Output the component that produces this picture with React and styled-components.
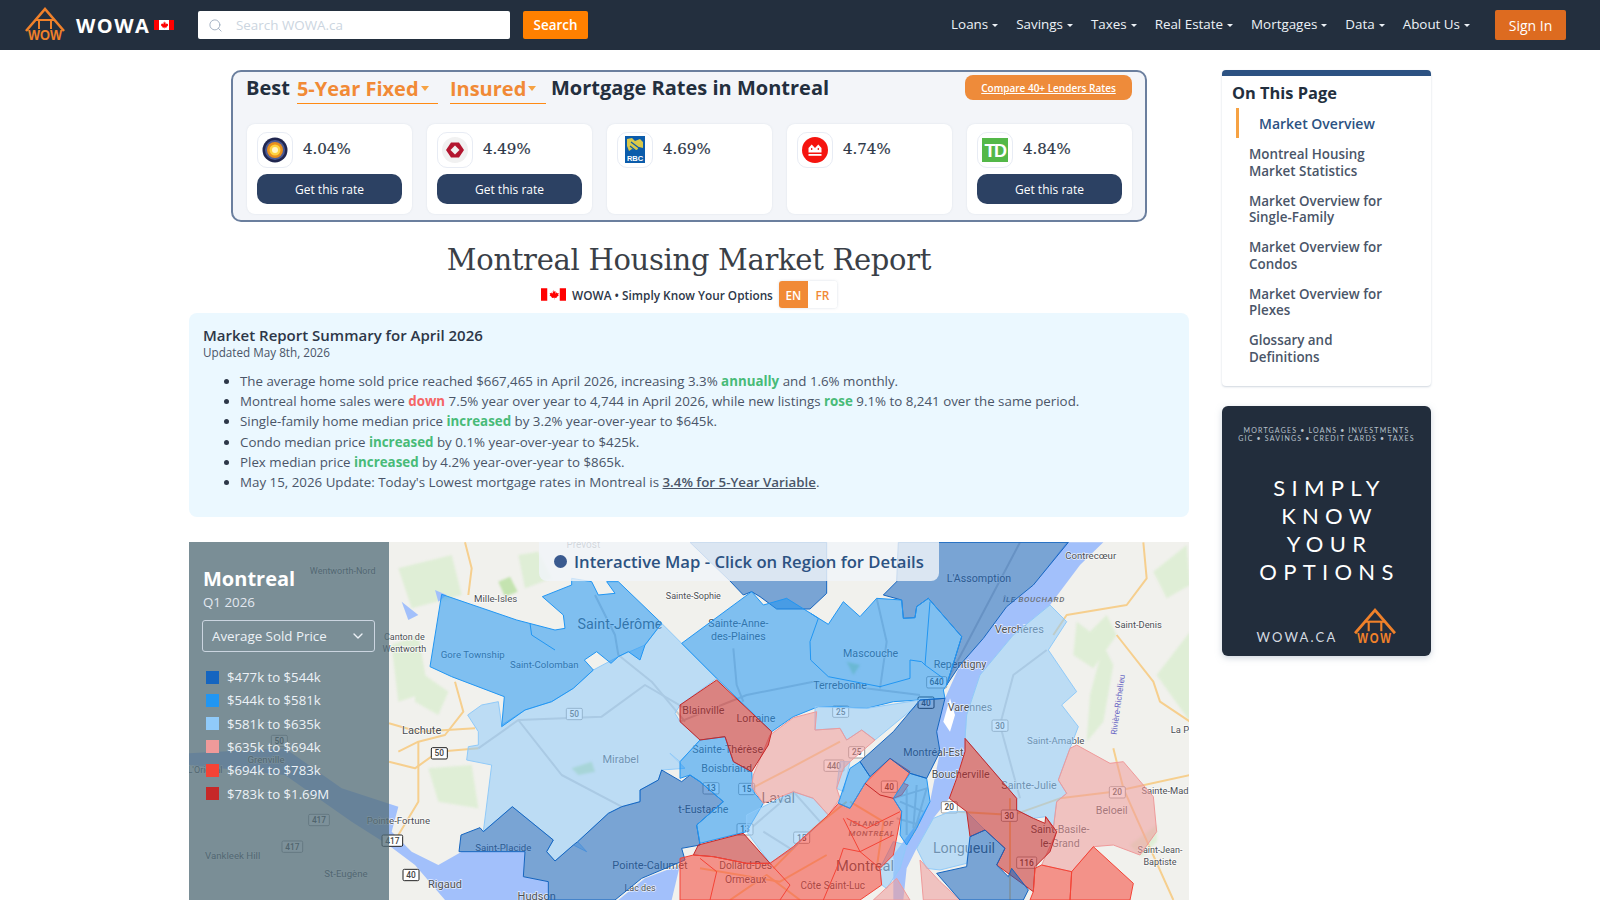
import React from "react";
import styled, { createGlobalStyle } from "styled-components";
import { Search, ChevronDown } from "lucide-react";

const GlobalStyle = createGlobalStyle`
  html, body { margin: 0; padding: 0; background: #fff; overflow: hidden; }
  body { font-family: "Open Sans", "Liberation Sans", sans-serif; color: #2d3748; }
  * { box-sizing: border-box; }
`;

const ORANGE = "#f18a36";
const NAVY = "#2c4163";
const TONES = {
  dark: "#1565c0",
  mid: "#2196f3",
  light: "#90caf9",
  pink: "#ef9a9a",
  red: "#f44336",
  crimson: "#c62828",
};

const menu = ["Loans", "Savings", "Taxes", "Real Estate", "Mortgages", "Data", "About Us"];

const legend = [
  ["dark", "$477k to $544k"],
  ["mid", "$544k to $581k"],
  ["light", "$581k to $635k"],
  ["pink", "$635k to $694k"],
  ["red", "$694k to $783k"],
  ["crimson", "$783k to $1.69M"],
];

const toc = [
  "Montreal Housing Market Statistics",
  "Market Overview for Single-Family",
  "Market Overview for Condos",
  "Market Overview for Plexes",
  "Glossary and Definitions",
];

// coordinates: map x = 3 * (page x - 185), y = 3 * (page y - 535)
const E = 1485;
const east = (s) =>
  s.trim().split(/\s+/).map((p) => {
    const [x, y] = p.split(",").map(Number);
    return `${x + E},${y}`;
  }).join(" ");

const regions = [
  ["light", "880,590 848,540 890,510 940,500 950,570 1020,525 1100,500 1165,460 1225,405 1300,365 1380,330 1430,265 1490,325 1595,430 1485,510 1470,535 1485,560 1545,615 1485,680 1455,655 1500,700 1430,705 1420,735 1365,765 1365,800 1310,815 1270,835 1178,920 1205,950 1165,930 1110,978 1085,950 1105,915 982,815 895,890 920,690 845,675 850,635 880,630"],
  ["mid", "770,178 995,255 1110,285 1140,280 1135,240 1072,185 1160,150 1160,130 1220,140 1240,180 1290,175 1265,140 1300,140 1430,265 1380,330 1365,375 1330,350 1300,365 1278,385 1235,350 1198,375 1225,405 1165,460 1100,500 1020,525 950,575 958,485 800,425 735,395"],
  ["dark", "822,950 828,900 885,878 895,890 982,815 1105,915 1085,950 1110,978 1165,930 1178,920 1270,835 1310,815 1365,800 1365,765 1420,735 1430,705 1490,740 1515,720 1545,740 1615,800 1535,870 1545,930 1490,940 1500,975 1370,1030 1290,1095 1090,1095 1090,1040 1015,1025 1020,950"],
  ["dark", east("30,22 440,22 440,175 390,222 290,222 240,185 215,170 190,180 150,138")],
  ["dark", east("610,180 650,140 655,22 1165,22 1060,150 980,215 910,310 840,390 800,450 845,305 745,190 710,215 705,248 670,250 665,195")],
  ["mid", east("5,325 215,170 250,210 320,190 392,235 445,268 490,200 540,245 590,190 665,195 670,250 705,248 710,215 745,190 845,305 800,450 790,465 795,490 720,495 640,500 560,520 470,515 415,515 340,545 275,590 110,430")],
  ["mid", east("0,680 60,615 135,605 160,680 215,710 220,770 250,805 200,890 60,925 50,870 130,800 60,740 30,720 0,730")],
  ["light", east("1110,210 1160,260 1105,345 1190,470 1145,510 1195,575 1170,640 1135,735 1160,775 1130,800 1120,880 1097,845 1060,850 1010,825 1010,790 855,610 860,540 900,420 1000,300")],
  ["light", east("405,515 560,520 720,495 700,520 585,615 545,585 500,615 480,580 405,585")],
  ["light", east("480,680 510,680 490,770 470,760")],
  ["light", east("200,840 340,770 400,790 445,840 340,940 270,985 200,890")],
  ["light", east("710,940 760,850 810,830 860,830 915,885 870,905 860,985 780,1005 740,1000")],
  ["light", east("640,920 680,930 660,1000 620,1060 605,1050 600,1000")],
  ["pink", east("220,720 270,600 340,548 410,530 405,585 480,580 500,615 545,585 585,615 510,680 490,700 470,760 480,790 445,840 400,790 340,770 250,805 215,755")],
  ["pink", east("1190,630 1290,685 1330,680 1420,785 1430,890 1380,960 1300,930 1240,935 1175,1010 1085,990 1130,890 1097,845 1120,880 1130,800 1160,775 1135,735 1170,640")],
  ["pink", east("580,1095 650,1030 690,1095")],
  ["pink", east("720,975 780,1040 840,1095 730,1095")],
  ["crimson", east("0,510 110,435 275,590 265,630 215,710 160,680 135,605 60,615 0,560")],
  ["crimson", east("855,610 1010,790 1010,825 1060,850 1095,865 1097,845 1130,890 1110,950 1065,995 1060,1070 950,990 975,940 915,885 870,905 860,830 808,790 830,730 855,650")],
  ["red", east("1240,935 1360,1045 1350,1095 1170,1095 1175,1010")],
  ["red", east("1085,990 1065,1000 1060,1070 1050,1095 1170,1095 1175,1010")],
  ["crimson", east("40,960 55,930 190,895 270,985 200,985 100,965")],
  ["red", east("40,960 100,965 200,985 270,985 340,935 445,840 475,805 510,820 555,745 630,670 690,710 670,745 685,750 665,780 640,790 665,830 640,960 600,1000 605,1050 540,1095 0,1095 0,970")],
  ["mid", east("475,805 510,700 540,680 570,725 555,745 510,820")],
  ["mid", east("640,790 670,745 690,715 740,730 750,800 710,880 680,930 660,900 665,830")],
  ["dark", east("540,680 640,590 720,495 795,490 770,590 780,650 740,730 690,715 630,670 570,725")],
  ["dark", east("870,905 915,885 975,940 950,990 985,1025 995,1000 1045,1065 1030,1095 840,1095 770,1015 860,995")],
];

const borders = [
  ["mid", "1035,265 1040,300 1110,345"],
  ["mid", east("392,235 415,250 390,320 392,375 445,425 600,455 690,430 690,375 725,380 735,390 790,430")],
  ["mid", east("750,200 735,390")],
  ["red", east("500,850 560,880 660,830")],
  ["red", east("490,850 540,950 640,900")],
  ["red", east("470,1000 490,940 540,950 600,1000")],
  ["red", east("270,985 330,1050 300,1095")],
  ["crimson", east("555,745 600,780 640,790")],
  ["red", east("90,1095 110,1010 60,970")],
  ["red", east("430,1095 470,1000")],
];

const greens = [
  ["940,140 975,125 998,170 960,185", true],
  ["620,330 700,300 730,470 640,500", false],
  ["690,400 790,470 760,540 690,500", false],
  ["730,700 860,690 880,820 760,800", false],
  ["640,100 800,60 830,180 680,220", false],
  ["1000,60 1060,50 1100,130 1020,160", false],
  ["1160,700 1220,680 1230,710 1180,720", true],
  [east("1190,260 1230,290 1280,240 1310,300 1240,400 1180,360"), false],
  [east("1230,480 1270,330 1300,390 1270,560 1220,620"), false],
  [east("1430,420 1530,290 1530,560"), false],
  [east("1420,110 1520,30 1530,150 1460,190"), false],
  [east("1350,930 1430,870 1430,920 1385,965"), false],
  [east("500,380 540,390 520,420"), true],
];

const waters = [
  "12,655 300,640 470,760 640,815 620,890 680,950 760,990 830,950 1020,950 1015,1025 1090,1040 1090,1095 780,1095 690,990 610,930 500,860 300,720 12,690",
  "650,200 700,240 670,255",
  "750,165 785,180 760,200",
  "1300,1095 1380,1030 1485,990 1460,1095",
  east("1160,22 1270,22 1200,90 1110,210 1000,300 900,420 860,540 855,650 808,790 760,850 710,940 680,1000 670,1095 640,1095 640,960 700,880 750,800 780,650 770,590 795,490 840,390 910,310 980,215 1060,150"),
];

const orangeRoads = [
  "612,680 690,700 760,650 880,640",
  "612,565 700,590 870,580",
  "840,22 860,100 850,180",
  "810,440 835,530 780,600 700,620 640,650",
  "700,620 700,800 640,900",
  east("1530,720 1300,770 1140,790 1000,840 830,830 760,800"),
  east("1390,22 1400,130 1340,210 1160,240 1120,300"),
  east("1310,300 1420,440 1440,500 1530,560"),
  east("1300,640 1330,760 1370,850 1480,1095"),
  east("990,790 990,1095"),
  east("215,760 330,700 480,620"),
  east("280,1000 400,880 500,800"),
  east("60,1000 300,1040 440,960"),
  east("510,800 610,860 590,1000"),
  east("150,1095 260,1020 360,1095"),
];

const greyRoads = [
  "880,640 1000,555 1250,545 1380,450 1500,520",
  "1230,180 1290,300 1300,360 1400,440 1500,560",
  "1000,555 1130,720 1310,815",
  east("1020,22 800,440"),
  east("590,190 620,320 600,460"),
  east("0,560 200,480 400,440 720,480"),
  east("160,340 170,450 190,500"),
  east("1100,345 1000,420 960,570 1020,790"),
  east("200,890 340,770 420,860"),
  east("640,790 740,760 700,900"),
  east("660,800 730,830"),
  east("650,850 720,870"),
  east("680,760 680,900"),
  east("710,750 700,880"),
  east("250,890 330,940"),
];

const labels = [
  ["Prevost", 1195, 38, 30],
  ["Wentworth-Nord", 473, 118, 27],
  ["Mille-Isles", 932, 200, 29],
  ["Canton de", 658, 316, 27],
  ["Wentworth", 658, 352, 27],
  ["Gore Township", 863, 370, 29],
  ["Saint-Colomban", 1078, 400, 29],
  ["Saint-Jérôme", 1305, 283, 43],
  ["Lachute", 710, 598, 33],
  ["Mirabel", 1307, 683, 33],
  ["Saint-Placide", 955, 948, 29],
  ["Pointe-Calumet", 1395, 1002, 33],
  ["Rigaud", 780, 1058, 33],
  ["Hudson", 1055, 1094, 33],
  ["Lac des", 1365, 1068, 27],
  ["Pointe-Fortune", 640, 868, 29],
  ["Grenville", 243, 683, 29],
  ["L'Orignal", 60, 714, 27],
  ["Vankleek Hill", 143, 973, 29],
  ["St-Eugène", 483, 1026, 29],
  ["Sainte-Sophie", E + 40, 193, 27],
  ["L'Assomption", E + 897, 142, 32],
  ["Contrecœur", E + 1232, 73, 29],
  ["Saint-Denis", E + 1375, 278, 28],
  ["Verchères", E + 1018, 293, 33],
  ["Sainte-Anne-", E + 175, 276, 32],
  ["des-Plaines", E + 175, 316, 32],
  ["Mascouche", E + 572, 365, 32],
  ["Repentigny", E + 840, 398, 32],
  ["Terrebonne", E + 480, 463, 32],
  ["Varennes", E + 870, 527, 32],
  ["La P", E + 1500, 593, 28],
  ["Saint-Amable", E + 1127, 627, 29],
  ["Blainville", E + 70, 537, 32],
  ["Lorraine", E + 228, 560, 32],
  ["Sainte-Thérèse", E + 143, 655, 32],
  ["Boisbriand", E + 140, 710, 32],
  ["Montréal-Est", E + 760, 664, 32],
  ["Boucherville", E + 842, 730, 32],
  ["Sainte-Julie", E + 1047, 762, 32],
  ["Laval", E + 295, 803, 43],
  ["Beloeil", E + 1295, 836, 32],
  ["Sainte-Mad", E + 1455, 777, 28],
  ["Saint-Basile-", E + 1140, 895, 32],
  ["le-Grand", E + 1140, 936, 32],
  ["Saint-Jean-", E + 1440, 953, 27],
  ["Baptiste", E + 1440, 989, 27],
  ["Longueuil", E + 852, 955, 43],
  ["Montreal", E + 555, 1007, 44],
  ["Dollard-Des", E + 197, 1003, 31],
  ["Ormeaux", E + 197, 1045, 31],
  ["Côte Saint-Luc", E + 458, 1063, 30],
  ["t-Eustache", E + 70, 835, 32],
];

const areaLabels = [
  ["ÎLE BOUCHARD", E + 1062, 202],
  ["ISLAND OF", E + 575, 873],
  ["MONTREAL", E + 575, 903],
];

const shields = [
  ["50", 1168, 537, 48, false],
  ["50", 763, 655, 48, true],
  ["50", 283, 618, 48, false],
  ["417", 402, 855, 62, false],
  ["417", 322, 935, 62, false],
  ["417", 622, 917, 62, true],
  ["40", 678, 1020, 48, true],
  ["640", E + 770, 442, 60, false],
  ["40", E + 738, 503, 48, true],
  ["25", E + 482, 530, 48, false],
  ["25", E + 530, 652, 48, false],
  ["440", E + 462, 692, 60, false],
  ["13", E + 93, 760, 48, false],
  ["15", E + 200, 762, 48, false],
  ["13", E + 195, 883, 48, false],
  ["15", E + 365, 908, 48, false],
  ["40", E + 628, 755, 48, false],
  ["30", E + 960, 572, 48, false],
  ["20", E + 808, 817, 48, false],
  ["30", E + 988, 842, 48, false],
  ["116", E + 1040, 983, 60, false],
  ["20", E + 1312, 772, 48, false],
];

const lenders = [
  { name: "tangerine", rate: "4.04%", cta: true },
  { name: "scotia", rate: "4.49%", cta: true },
  { name: "rbc", rate: "4.69%", cta: false },
  { name: "bmo", rate: "4.74%", cta: false },
  { name: "td", rate: "4.84%", cta: true },
];

const Page = styled.div`
  width: 1600px;
  height: 900px;
  overflow: hidden;
`;

const Nav = styled.header`
  height: 50px;
  background: #232f3e;
  display: flex;
  align-items: center;
  padding: 0 34px 0 25px;
`;

const Brand = styled.div`
  display: flex;
  align-items: center;
  width: 173px;
`;

const BrandName = styled.span`
  color: #fff;
  font-size: 20px;
  font-weight: 700;
  letter-spacing: 1.5px;
  margin: 0 4px 0 11px;
`;

const SearchBox = styled.div`
  width: 312px;
  height: 28px;
  background: #fff;
  border-radius: 2px;
  display: flex;
  align-items: center;
  gap: 13px;
  padding-left: 10px;
  color: #a0aec0;
  font-size: 13.4px;
  span { color: #cbd5e0; }
`;

const SearchButton = styled.button`
  height: 28px;
  width: 65px;
  margin-left: 13px;
  border: 0;
  border-radius: 2px;
  background: #ff8000;
  color: #fff;
  font: 600 13.4px "Open Sans", sans-serif;
`;

const Menu = styled.nav`
  margin-left: auto;
  margin-top: -2px;
  display: flex;
  gap: 18px;
  color: #edf2f7;
  font-size: 13.4px;
`;

const MenuItem = styled.span`
  display: flex;
  align-items: center;
  gap: 4px;
`;

const Caret = styled.i`
  width: 0;
  height: 0;
  margin-top: ${(p) => (p.$big ? 0 : 3)}px;
  border-left: ${(p) => (p.$big ? 4.5 : 3)}px solid transparent;
  border-right: ${(p) => (p.$big ? 4.5 : 3)}px solid transparent;
  border-top: ${(p) => (p.$big ? 5 : 3)}px solid ${(p) => p.$color || "#edf2f7"};
`;

const SignIn = styled.button`
  width: 71px;
  height: 30px;
  margin-left: 25px;
  border: 0;
  border-radius: 2px;
  background: #dd6b20;
  color: #fff;
  font: 400 14px "Open Sans", sans-serif;
`;

const Body = styled.div`
  display: flex;
  gap: 33px;
  padding-left: 189px;
`;

const Main = styled.main`
  width: 1000px;
  display: flex;
  flex-direction: column;
  align-items: center;
`;

const RateBox = styled.section`
  width: 916px;
  height: 152px;
  margin-top: 20px;
  border: 2px solid #6b7f9e;
  border-radius: 10px;
  background: #f3f5f9;
  padding: 0 13px 0 14px;
`;

const RateHead = styled.div`
  height: 52px;
  margin-left: -1px;
  display: flex;
  align-items: flex-start;
  font-size: 20px;
  font-weight: 700;
  color: #232f3e;
  padding-top: 2px;
  white-space: nowrap;
`;

const Pick = styled.span`
  display: flex;
  align-items: center;
  gap: 2px;
  width: ${(p) => p.$width}px;
  height: 30px;
  margin: 0 ${(p) => p.$after}px 0 ${(p) => p.$before}px;
  color: ${ORANGE};
  font-weight: 700;
  border-bottom: 1.5px solid #ff8a14;
`;

const Compare = styled.a`
  margin: 1px 0 0 auto;
  width: 167px;
  height: 25px;
  border-radius: 8px;
  background: #ee8b3a;
  color: #fff;
  font-size: 10px;
  font-weight: 600;
  text-decoration: underline;
  display: flex;
  align-items: center;
  justify-content: center;
`;

const Lenders = styled.div`
  display: flex;
  gap: 15px;
`;

const LenderCard = styled.div`
  width: 165px;
  height: 90px;
  background: #fff;
  border-radius: 8px;
  padding: 8px 10px 0;
  box-shadow: 0 0 2px rgba(160, 174, 192, 0.25);
`;

const LenderTop = styled.div`
  display: flex;
  align-items: flex-start;
  gap: 10px;
`;

const LogoTile = styled.div`
  width: 36px;
  height: 36px;
  border: 1px solid #e8ecf4;
  border-radius: 10px;
  display: flex;
  align-items: center;
  justify-content: center;
`;

const Rate = styled.span`
  font-family: "DejaVu Serif", serif;
  font-size: 15px;
  font-weight: 400;
  color: #2d3748;
  margin-top: 8px;
  -webkit-text-stroke: 0.2px #2d3748;
`;

const RateButton = styled.button`
  display: block;
  width: 145px;
  height: 30px;
  margin-top: 6px;
  border: 0;
  border-radius: 10px;
  background: ${NAVY};
  color: #fff;
  font: 400 12px "Open Sans", sans-serif;
`;

const Title = styled.h1`
  margin: 17px 0 0;
  font-family: "DejaVu Serif", serif;
  font-size: 29px;
  font-weight: 400;
  line-height: 43px;
  color: #3a3f47;
  letter-spacing: -0.3px;
`;

const TagRow = styled.div`
  display: flex;
  align-items: center;
  gap: 6px;
  height: 27px;
  margin-top: -1px;
  font-size: 11.8px;
  font-weight: 600;
  color: #2d3748;
`;

const LangGroup = styled.div`
  display: flex;
  border-radius: 3px;
  overflow: hidden;
  box-shadow: 0 0 3px rgba(160, 174, 192, 0.4);
`;

const Lang = styled.span`
  width: 29px;
  height: 27px;
  display: flex;
  align-items: center;
  justify-content: center;
  font-size: 11.8px;
  font-weight: 600;
  background: ${(p) => (p.$active ? ORANGE : "#fff")};
  color: ${(p) => (p.$active ? "#fff" : ORANGE)};
`;

const Summary = styled.section`
  width: 100%;
  height: 204px;
  margin-top: 5px;
  padding: 13px 14px 0;
  background: #ebf8ff;
  border-radius: 8px;
`;

const SummaryTitle = styled.h2`
  margin: 0;
  font-size: 15px;
  font-weight: 600;
  line-height: 19px;
  color: #2d3748;
`;

const Updated = styled.p`
  margin: 0;
  font-size: 11.7px;
  line-height: 14px;
  color: #4a5568;
`;

const Points = styled.ul`
  margin: 12px 0 0;
  padding-left: 37px;
  font-size: 13.33px;
  line-height: 20.2px;
  color: #4a5568;
  li::marker { color: #2d3748; }
`;

const Mark = styled.b`
  font-weight: 700;
  color: ${(p) => (p.$down ? "#f56565" : "#48bb78")};
`;

const RateLink = styled.a`
  font-weight: 600;
  text-decoration: underline;
  color: #4a5568;
`;

const MapFrame = styled.section`
  position: relative;
  width: 100%;
  height: 359px;
  margin-top: 25px;
  overflow: hidden;
`;

const MapSvg = styled.svg`
  display: block;
  width: 1000px;
  height: 358px;
  background: #f1f1ed;
`;

const Region = styled.polygon`
  fill: ${(p) => TONES[p.$tone]};
  fill-opacity: 0.55;
  stroke: ${(p) => TONES[p.$tone]};
  stroke-width: 3;
  stroke-linejoin: round;
`;

const Border = styled.polyline`
  fill: none;
  stroke: ${(p) => TONES[p.$tone]};
  stroke-width: 3;
`;

const GreenLayer = styled.g`
  filter: blur(3px);
`;

const Green = styled.polygon`
  fill: ${(p) => (p.$park ? "#c4e3b0" : "#dfeed6")};
`;

const Water = styled.polygon`
  fill: #a2c0fb;
`;

const Island = styled.polygon`
  fill: #fff;
`;

const Road = styled.polyline`
  fill: none;
  stroke: ${(p) => (p.$major ? "#f6cf8e" : "#c9c9c9")};
  stroke-width: 6;
  stroke-linejoin: round;
`;

const Place = styled.text`
  font-family: Roboto, sans-serif;
  text-anchor: middle;
  fill: #4c4f54;
  stroke: #fff;
  stroke-width: 4;
  stroke-opacity: 0.75;
  paint-order: stroke;
`;

const AreaName = styled.text`
  font-family: Roboto, sans-serif;
  font-size: 24px;
  font-style: italic;
  font-weight: 500;
  letter-spacing: 2px;
  text-anchor: middle;
  fill: #6c6f74;
`;

const River = styled.text`
  font-family: Roboto, sans-serif;
  font-size: 25px;
  fill: #6a67c4;
  text-anchor: middle;
`;

const ShieldBox = styled.rect`
  fill: #fff;
  stroke: ${(p) => (p.$strong ? "#222" : "#9a9a9a")};
  stroke-width: 3;
`;

const ShieldText = styled.text`
  font-family: Roboto, sans-serif;
  font-size: 25px;
  font-weight: 500;
  text-anchor: middle;
  fill: #444;
`;

const Panel = styled.aside`
  position: absolute;
  left: 0;
  top: 0;
  bottom: 0;
  width: 200px;
  padding: 24px 14px 0 13px;
  background: rgba(84, 110, 122, 0.76);
  color: #fff;
`;

const PanelTitle = styled.div`
  font-size: 20px;
  font-weight: 700;
  line-height: 26px;
  padding-left: 1px;
`;

const PanelSub = styled.div`
  font-size: 13.33px;
  line-height: 21px;
  color: #e2e8f0;
  padding-left: 1px;
`;

const MetricSelect = styled.div`
  height: 32px;
  margin-top: 7px;
  display: flex;
  align-items: center;
  justify-content: space-between;
  padding: 0 8px 0 9px;
  border: 1px solid #cbd5e0;
  border-radius: 3px;
  font-size: 13.33px;
  color: #edf2f7;
`;

const LegendList = styled.div`
  margin-top: 18px;
  padding-left: 4px;
  display: flex;
  flex-direction: column;
  gap: 9.33px;
`;

const LegendRow = styled.div`
  display: flex;
  align-items: center;
  gap: 8px;
  height: 14px;
  font-size: 13.2px;
  color: #edf2f7;
`;

const Swatch = styled.i`
  width: 13px;
  height: 13px;
  background: ${(p) => TONES[p.$tone]};
`;

const MapChip = styled.div`
  position: absolute;
  top: 0;
  left: 350px;
  width: 400px;
  height: 39px;
  display: flex;
  align-items: center;
  gap: 7px;
  padding-left: 15px;
  border-radius: 0 0 8px 8px;
  background: rgba(240, 244, 249, 0.82);
  color: #2c5282;
  font-size: 16.66px;
  font-weight: 600;
  white-space: nowrap;
`;

const Dot = styled.i`
  width: 13px;
  height: 13px;
  border-radius: 50%;
  background: #3a5a8f;
`;

const Side = styled.aside`
  width: 209px;
  padding-top: 20px;
`;

const TocCard = styled.div`
  height: 316px;
  border-top: 6px solid #2c5282;
  border-radius: 4px;
  padding: 0 10px;
  box-shadow: 0 1px 2px rgba(160, 174, 192, 0.5);
`;

const TocTitle = styled.div`
  font-size: 16.4px;
  font-weight: 700;
  line-height: 23px;
  margin-top: 5px;
  color: #232f3e;
`;

const TocActive = styled.div`
  height: 30px;
  margin: 4px 0 0 4px;
  padding-left: 20px;
  display: flex;
  align-items: center;
  border-left: 3px solid #f6a243;
  font-size: 14px;
  font-weight: 600;
  color: #2c5282;
`;

const TocItem = styled.div`
  margin: 7px 0 0 17px;
  padding: 1px 0;
  width: 150px;
  min-height: 40px;
  font-size: 13.4px;
  font-weight: 600;
  line-height: 16.6px;
  color: #4a5568;
  & + & { margin-top: 6.5px; }
`;

const Ad = styled.div`
  height: 250px;
  margin-top: 20px;
  background: #222d3c;
  border-radius: 6px;
  box-shadow: 0 2px 6px rgba(160, 174, 192, 0.5);
  color: #fff;
  display: flex;
  flex-direction: column;
  align-items: center;
  font-family: Lato, sans-serif;
`;

const AdSmall = styled.div`
  margin-top: 20px;
  font-size: 7px;
  line-height: 8.4px;
  letter-spacing: 1.2px;
  text-align: center;
  color: #b9c2cc;
`;

const AdBig = styled.div`
  margin-top: 31px;
  padding-left: 6px;
  font-size: 22px;
  line-height: 28px;
  letter-spacing: 6.3px;
  text-align: center;
`;

const AdFoot = styled.div`
  margin-top: 21px;
  display: flex;
  align-items: flex-end;
  gap: 17px;
  font-size: 13px;
  letter-spacing: 2.2px;
  color: #d5dae0;
`;

const AdBrand = styled.span`
  margin-bottom: 2px;
`;

const Flag = ({ w, h }) => (
  <svg width={w} height={h} viewBox="0 0 36 18">
    <rect width="36" height="18" fill="#fff" />
    <rect width="9" height="18" fill="#f00" />
    <rect x="27" width="9" height="18" fill="#f00" />
    <path d="M18 2l1.6 3 1.6-.8-.6 3.7 2-2 .5 1.4 2.4-.4-.8 2.600 1 .5-3.400 2.800.4 1.200-3.500-.5v2.700h-.4v-2.700l-3.500.5.4-1.200-3.400-2.800 1-.5-.8-2.600 2.400.4.5-1.400 2 2-.6-3.700 1.600.8z" fill="#f00" />
  </svg>
);

const HouseLogo = ({ size }) => (
  <svg width={size} height={size * 0.95} viewBox="0 0 40 38">
    <path d="M1 25 L20 3 L39 25" fill="none" stroke="#f0812a" strokeWidth="2.600" />
    <path d="M10 14 H30" stroke="#f0812a" strokeWidth="2" />
    <path d="M14 14 V23 M26 14 V23" stroke="#f0812a" strokeWidth="2" />
    <text x="20" y="34" textAnchor="middle" fontFamily="Liberation Sans, sans-serif" fontWeight="700" fontSize="14" textLength="34" lengthAdjust="spacingAndGlyphs" fill="#f0812a">WOW</text>
  </svg>
);

const LenderLogo = ({ name }) => {
  if (name === "tangerine") {
    return (
      <svg width="26" height="26" viewBox="0 0 26 26">
        <circle cx="13" cy="13" r="12.5" fill="#20264f" />
        <circle cx="13" cy="13" r="10" fill="#4c5a94" />
        <circle cx="13" cy="13" r="8" fill="#e88f1d" />
        <circle cx="13" cy="13" r="5.5" fill="#ffd23f" />
        <circle cx="13" cy="13" r="3" fill="#fff6c8" />
      </svg>
    );
  }
  if (name === "scotia") {
    return (
      <svg width="26" height="26" viewBox="0 0 26 26">
        <circle cx="13" cy="13" r="13" fill="#f1f1f1" />
        <path d="M9 5.500h8L22 13l-5 7.500H9L4 13z" fill="#b3162f" />
        <path d="M13 8.500l4.500 4.500-4.500 4.500L8.500 13z" fill="#f1f1f1" />
      </svg>
    );
  }
  if (name === "rbc") {
    return (
      <svg width="22" height="28" viewBox="0 0 22 28">
        <path d="M1 0h20v27H1z" fill="#0b5cab" />
        <path d="M3 3l5-1 3 3 5-2 3 3v6l-4-1-2 3-5-1-3 2-2-5z" fill="#d9c84a" />
        <path d="M7 6l8 6M6 10l5 4" stroke="#0b5cab" strokeWidth="1.2" />
        <text x="11" y="25" textAnchor="middle" fontFamily="Liberation Sans, sans-serif" fontWeight="700" fontSize="7.5" fill="#fff">RBC</text>
      </svg>
    );
  }
  if (name === "bmo") {
    return (
      <svg width="26" height="26" viewBox="0 0 26 26">
        <circle cx="13" cy="13" r="13" fill="#f5140f" />
        <path d="M6.500 15.500V11l3.200-3.500L13 11l3.300-3.500L19.500 11v4.500z" fill="#fff" />
        <path d="M6.500 17h13v1.800h-13z" fill="#fff" />
        <path d="M9.700 11v2M16.300 11v2" stroke="#f5140f" strokeWidth="1.200" />
      </svg>
    );
  }
  return (
    <svg width="26" height="24" viewBox="0 0 26 24">
      <rect width="26" height="24" fill="#54b848" />
      <text x="13" y="19" textAnchor="middle" fontFamily="Liberation Sans, sans-serif" fontWeight="700" fontSize="18" letterSpacing="-1.5" fill="#fff">TD</text>
    </svg>
  );
};

const Shield = ({ text, x, y, w, strong }) => (
  <g>
    <ShieldBox x={x - w / 2} y={y - 17} width={w} height={34} rx="4" $strong={strong} />
    <ShieldText x={x} y={y + 9}>{text}</ShieldText>
  </g>
);

const MapArt = () => (
  <MapSvg viewBox="12 21 3000 1074">
    <GreenLayer>
      {greens.map(([p, park], i) => <Green key={i} points={p} $park={park} />)}
    </GreenLayer>
    {orangeRoads.map((p, i) => <Road key={i} points={p} $major />)}
    {waters.map((p, i) => <Water key={i} points={p} />)}
    <Island points={east("790,560 810,490 825,540 810,590")} />
    {greyRoads.map((p, i) => <Road key={i} points={p} />)}
    {labels.map(([t, x, y, s]) => <Place key={t} x={x} y={y} fontSize={s}>{t}</Place>)}
    {areaLabels.map(([t, x, y]) => <AreaName key={t} x={x} y={y}>{t}</AreaName>)}
    <River x="0" y="0" transform={`translate(${E + 1322} 510) rotate(-82)`}>Rivière-Richelieu</River>
    {shields.map(([t, x, y, w, s], i) => <Shield key={i} text={t} x={x} y={y} w={w} strong={s} />)}
    {regions.map(([tone, p], i) => <Region key={i} points={p} $tone={tone} />)}
    {borders.map(([tone, p], i) => <Border key={i} points={p} $tone={tone} />)}
  </MapSvg>
);

export default function App() {
  return (
    <Page>
      <GlobalStyle />
      <Nav>
        <Brand>
          <HouseLogo size={40} />
          <BrandName>WOWA</BrandName>
          <Flag w={20} h={10} />
        </Brand>
        <SearchBox>
          <Search size={15} strokeWidth={1.5} />
          <span>Search WOWA.ca</span>
        </SearchBox>
        <SearchButton>Search</SearchButton>
        <Menu>
          {menu.map((m) => (
            <MenuItem key={m}>{m}<Caret /></MenuItem>
          ))}
        </Menu>
        <SignIn>Sign In</SignIn>
      </Nav>
      <Body>
        <Main>
          <RateBox>
            <RateHead>
              Best
              <Pick $width={141} $before={7} $after={12}>5-Year Fixed<Caret $big $color="#f6a243" /></Pick>
              <Pick $width={96} $before={0} $after={5}>Insured<Caret $big $color="#f6a243" /></Pick>
              Mortgage Rates in Montreal
              <Compare>Compare 40+ Lenders Rates</Compare>
            </RateHead>
            <Lenders>
              {lenders.map((l) => (
                <LenderCard key={l.name}>
                  <LenderTop>
                    <LogoTile><LenderLogo name={l.name} /></LogoTile>
                    <Rate>{l.rate}</Rate>
                  </LenderTop>
                  {l.cta && <RateButton>Get this rate</RateButton>}
                </LenderCard>
              ))}
            </Lenders>
          </RateBox>
          <Title>Montreal Housing Market Report</Title>
          <TagRow>
            <Flag w={25} h={13} />
            WOWA • Simply Know Your Options
            <LangGroup>
              <Lang $active>EN</Lang>
              <Lang>FR</Lang>
            </LangGroup>
          </TagRow>
          <Summary>
            <SummaryTitle>Market Report Summary for April 2026</SummaryTitle>
            <Updated>Updated May 8th, 2026</Updated>
            <Points>
              <li>The average home sold price reached $667,465 in April 2026, increasing 3.3% <Mark>annually</Mark> and 1.6% monthly.</li>
              <li>Montreal home sales were <Mark $down>down</Mark> 7.5% year over year to 4,744 in April 2026, while new listings <Mark>rose</Mark> 9.1% to 8,241 over the same period.</li>
              <li>Single-family home median price <Mark>increased</Mark> by 3.2% year-over-year to $645k.</li>
              <li>Condo median price <Mark>increased</Mark> by 0.1% year-over-year to $425k.</li>
              <li>Plex median price <Mark>increased</Mark> by 4.2% year-over-year to $865k.</li>
              <li>May 15, 2026 Update: Today's Lowest mortgage rates in Montreal is <RateLink>3.4% for 5-Year Variable</RateLink>.</li>
            </Points>
          </Summary>
          <MapFrame>
            <MapArt />
            <Panel>
              <PanelTitle>Montreal</PanelTitle>
              <PanelSub>Q1 2026</PanelSub>
              <MetricSelect>
                Average Sold Price
                <ChevronDown size={16} />
              </MetricSelect>
              <LegendList>
                {legend.map(([tone, text]) => (
                  <LegendRow key={tone}><Swatch $tone={tone} />{text}</LegendRow>
                ))}
              </LegendList>
            </Panel>
            <MapChip><Dot />Interactive Map - Click on Region for Details</MapChip>
          </MapFrame>
        </Main>
        <Side>
          <TocCard>
            <TocTitle>On This Page</TocTitle>
            <TocActive>Market Overview</TocActive>
            {toc.map((t) => <TocItem key={t}>{t}</TocItem>)}
          </TocCard>
          <Ad>
            <AdSmall>
              MORTGAGES • LOANS • INVESTMENTS<br />
              GIC • SAVINGS • CREDIT CARDS • TAXES
            </AdSmall>
            <AdBig>SIMPLY<br />KNOW<br />YOUR<br />OPTIONS</AdBig>
            <AdFoot><AdBrand>WOWA.CA</AdBrand><HouseLogo size={42} /></AdFoot>
          </Ad>
        </Side>
      </Body>
    </Page>
  );
}
